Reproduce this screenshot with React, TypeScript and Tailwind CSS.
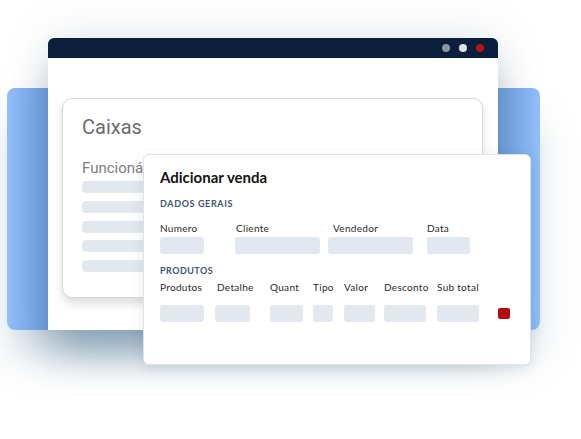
const bars = [0, 1, 2, 3, 4]

const geral = [
  { label: 'Numero', col: 'w-[75px]', input: 'w-[44px]', pad: 'pl-0' },
  { label: 'Cliente', col: 'w-[93px]', input: 'w-[85px]', pad: 'pl-[1px]' },
  { label: 'Vendedor', col: 'w-[99px]', input: 'w-[85px]', pad: 'pl-[5px]' },
  { label: 'Data', col: 'w-[44px]', input: 'w-[43px]', pad: 'pl-0' },
]

const produtos = [
  { label: 'Produtos', col: 'w-[55px]', input: 'w-[44px]', pad: 'pl-0' },
  { label: 'Detalhe', col: 'w-[55px]', input: 'w-[35px]', pad: 'pl-[2px]' },
  { label: 'Quant', col: 'w-[43px]', input: 'w-[33px]', pad: 'pl-0' },
  { label: 'Tipo', col: 'w-[31px]', input: 'w-[20px]', pad: 'pl-0' },
  { label: 'Valor', col: 'w-[40px]', input: 'w-[31px]', pad: 'pl-0' },
  { label: 'Desconto', col: 'w-[53px]', input: 'w-[42px]', pad: 'pl-0' },
  { label: 'Sub total', col: 'w-[61px]', input: 'w-[42px]', pad: 'pl-0' },
]

function WindowDots() {
  return (
    <div className="flex items-center gap-[9px]">
      <span className="w-2 h-2 rounded-full bg-[#8b95a5]" />
      <span className="w-2 h-2 rounded-full bg-[#dde2e9]" />
      <span className="w-2 h-2 rounded-full bg-[#b5161a]" />
    </div>
  )
}

function CaixasCard() {
  return (
    <div className="ml-[14px] mt-[40px] w-[421px] h-[200px] rounded-[10px] border border-[#d7d7d7] bg-white shadow-[0_6px_10px_rgba(0,0,0,0.13)] pl-[19px] pt-[14px] overflow-hidden font-['Roboto',sans-serif]">
      <div className="text-[20px] leading-[28px] text-[#6d6d6d]">Caixas</div>
      <div className="mt-[17px] text-[15px] leading-[20px] text-[#7d7d7d]">Funcionários</div>
      <div className="mt-[3px] flex flex-col gap-[7.75px]">
        {bars.map((i) => (
          <div key={i} className="h-[12px] w-[300px] rounded-sm bg-[#e3e7ee]" />
        ))}
      </div>
    </div>
  )
}

function AdicionarVenda() {
  return (
    <div className="absolute left-[143px] top-[154px] w-[388px] h-[211px] rounded-md border border-[#dbe3ee] bg-white shadow-[0_4px_14px_rgba(30,50,80,0.10)] pl-[16px] pt-[12px] font-['Lato',sans-serif]">
      <h3 className="text-[15px] leading-[20px] font-bold text-[#141414]">Adicionar venda</h3>

      <div className="mt-[11px] text-[9px] leading-[12px] font-bold tracking-[0.07em] text-[#3e5572]">
        DADOS GERAIS
      </div>
      <div className="mt-[11.5px] flex">
        {geral.map((f) => (
          <div key={f.label} className={f.col}>
            <div className={`text-[10px] leading-[12px] tracking-[0.03em] text-[#2a2a2a] ${f.pad}`}>{f.label}</div>
            <div className={`mt-[3px] h-[17px] rounded-[3px] bg-[#e3e8f0] ${f.input}`} />
          </div>
        ))}
      </div>

      <div className="mt-[11.5px] text-[9px] leading-[12px] font-bold tracking-[0.05em] text-[#3e5572]">
        PRODUTOS
      </div>
      <div className="mt-[3.5px] flex items-end">
        {produtos.map((f) => (
          <div key={f.label} className={f.col}>
            <div className={`text-[10px] leading-[12px] tracking-[0.03em] text-[#2a2a2a] whitespace-nowrap ${f.pad}`}>{f.label}</div>
            <div className={`mt-[12px] h-[17px] rounded-[3px] bg-[#e3e8f0] ${f.input}`} />
          </div>
        ))}
        <div className="mb-[3px] w-[12px] h-[11px] rounded-[2px] bg-[#b50d0d]" />
      </div>
    </div>
  )
}

export default function App() {
  return (
    <div className="relative w-[581px] h-[439px] bg-white overflow-hidden">
      {/* blue backdrop */}
      <div className="absolute left-[7px] top-[88px] w-[533px] h-[242px] rounded-lg bg-[linear-gradient(90deg,#93c0f9_0%,#6c9ce0_8%,#5b8dd8_50%,#6c9ce0_92%,#93c0f9_100%)] shadow-[0_30px_40px_-8px_rgba(80,120,150,0.35)]" />

      {/* browser window */}
      <div className="absolute left-[48px] top-[38px] w-[450px] h-[292px] rounded-t-md bg-white shadow-[0_28px_36px_-6px_rgba(70,110,140,0.45),0_0_44px_rgba(120,140,165,0.22)]">
        <div className="h-[20px] rounded-t-md bg-[#0b1f3d] flex items-center justify-end pr-[14px]">
          <WindowDots />
        </div>
        <CaixasCard />
      </div>

      <AdicionarVenda />
    </div>
  )
}
